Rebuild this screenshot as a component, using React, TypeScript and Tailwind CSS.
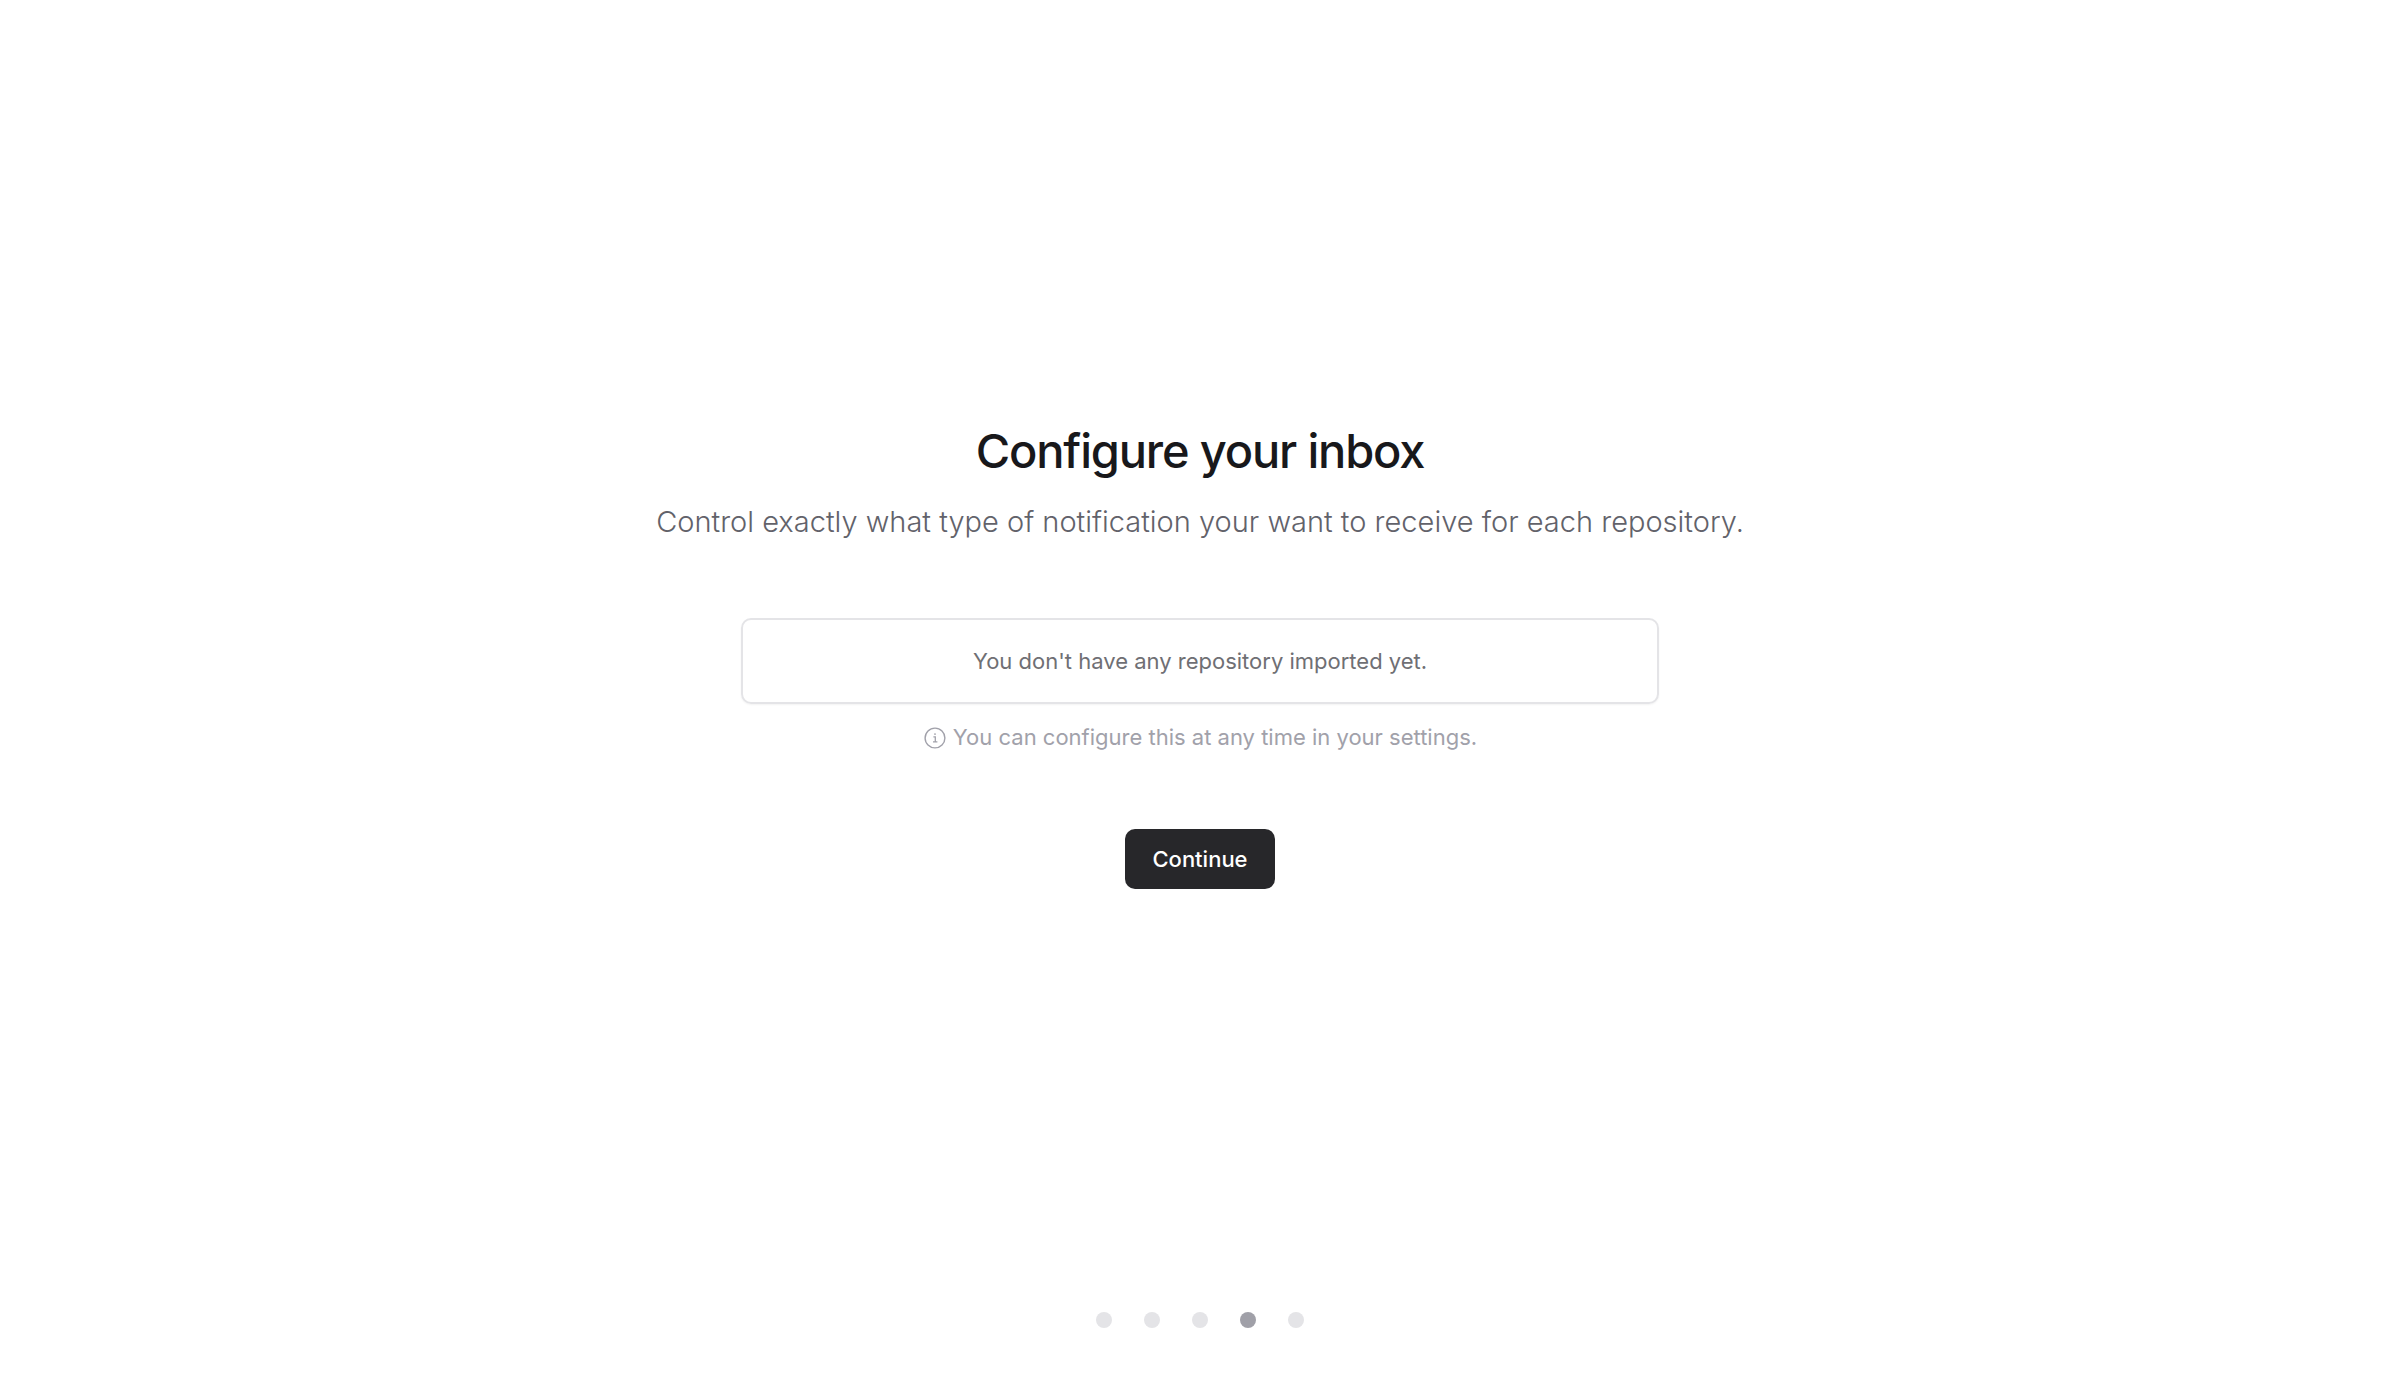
const steps = ["Welcome", "Account", "Import", "Inbox", "Done"];
const currentStep = 3;

function InfoIcon() {
  return (
    <svg className="h-6 w-6 shrink-0" viewBox="0 0 24 24" fill="none" stroke="currentColor" aria-hidden="true">
      <circle cx="12" cy="13" r="9.9" strokeWidth="1.4" />
      <path d="M10.4 11.9h1.9v4.8M10 16.9h4.4" strokeWidth="1.3" />
      <circle cx="12" cy="9.1" r="0.9" fill="currentColor" stroke="none" />
    </svg>
  );
}

function StepDots() {
  return (
    <ol className="flex justify-center gap-8 pb-[51px]">
      {steps.map((step, index) => (
        <li
          key={step}
          aria-current={index === currentStep ? "step" : undefined}
          className={`h-4 w-4 rounded-full ${index === currentStep ? "bg-[#a0a0a8]" : "bg-[#e4e4e7]"}`}
        />
      ))}
    </ol>
  );
}

export default function App() {
  return (
    <div className="flex min-h-screen flex-col bg-white font-['Inter',sans-serif]">
      <main className="flex flex-1 flex-col items-center justify-center px-6 text-center">
        <h1 className="text-[47px] leading-[56px] font-medium tracking-tight text-[#18181b]">
          Configure your inbox
        </h1>
        <p className="mt-[23px] text-[29px] leading-10 font-light text-[#62626a]">
          Control exactly what type of notification your want to receive for each repository.
        </p>

        <div className="mt-[76px] w-full max-w-[918px] rounded-[10px] border-2 border-[#e4e4e7] py-[25px] shadow-xs">
          <p className="text-[22px] leading-8 text-[#6f6f74]">You don't have any repository imported yet.</p>
        </div>
        <p className="mt-[17px] flex items-center gap-1.5 text-[22px] leading-8 text-[#a1a1aa]">
          <InfoIcon />
          You can configure this at any time in your settings.
        </p>

        <button
          type="button"
          className="mt-[76px] rounded-[10px] bg-[#27272a] px-[27px] py-3.5 text-[22px] leading-8 font-medium text-white"
        >
          Continue
        </button>
      </main>
      <StepDots />
    </div>
  );
}
